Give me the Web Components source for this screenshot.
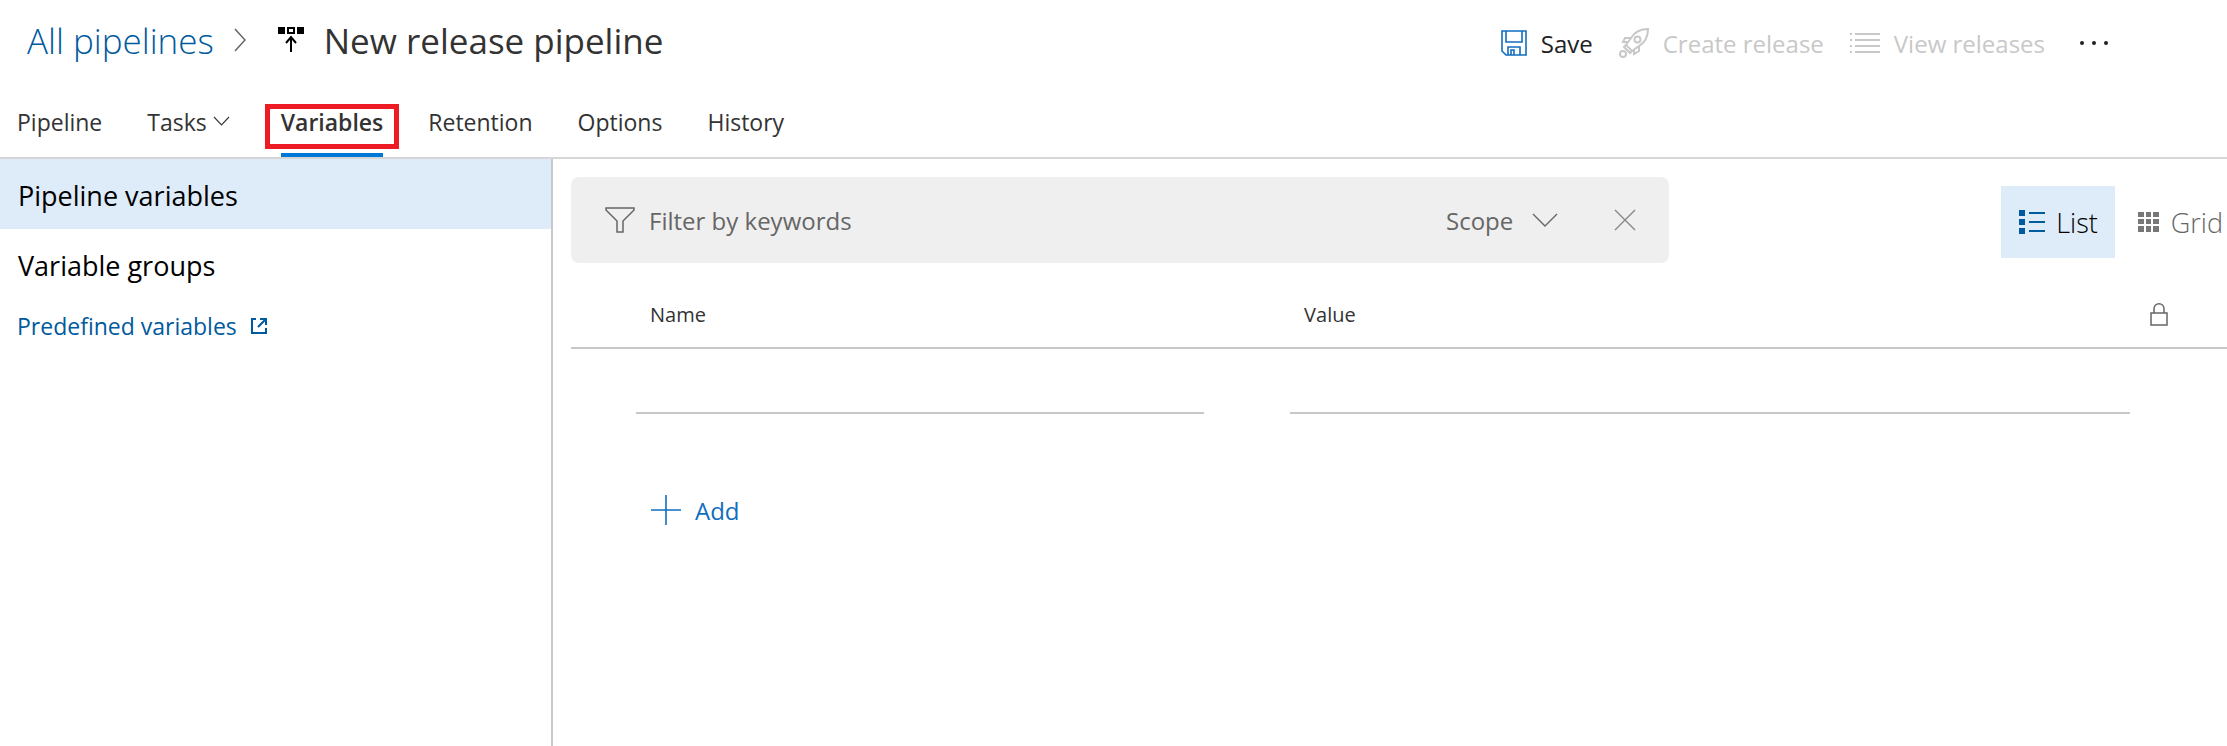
<!DOCTYPE html>
<html lang="en">
<head>
<meta charset="utf-8">
<title>New release pipeline</title>
<style>
  html, body { height: 100%; margin: 0; background: #fff; }
  body { font: 24px "Open Sans", "Noto Sans", sans-serif; color: #333; }
</style>
</head>
<body>
<release-page>
  <page-header slot="header">
    <tool-button icon="save" accent>Save</tool-button>
    <tool-button icon="rocket" disabled>Create release</tool-button>
    <tool-button icon="lines" disabled>View releases</tool-button>
    <tool-button icon="more" label="More actions"></tool-button>
  </page-header>
  <tab-strip slot="tabs">
    <tab-item>Pipeline</tab-item>
    <tab-item menu>Tasks</tab-item>
    <tab-item selected>Variables</tab-item>
    <tab-item>Retention</tab-item>
    <tab-item>Options</tab-item>
    <tab-item>History</tab-item>
  </tab-strip>
  <side-nav slot="nav"></side-nav>
  <filter-row></filter-row>
  <variable-table></variable-table>
</release-page>

<script>
const ICONS = {
  save: [26, 26, '<path d="M1 1H25V25H5L1 21Z M5 1V12H21V1 M7 25V17H19V25 M10 25V20H13V25" fill="none" stroke="currentColor" stroke-width="1.600"/>'],
  rocket: [30, 30, '<g fill="none" stroke="currentColor" stroke-width="2"><path d="M29 1C21 1 15 5 12 10L7 17L13 23L20 18C25 15 29 9 29 1Z"/><circle cx="18.500" cy="11.500" r="3"/><path d="M12 10H6L4 14L9 14 M20 18V23L15 26V21 M7 17L5 19L11 25L13 23"/><circle cx="4" cy="26" r="3"/></g>'],
  lines: [30, 20, '<path d="M5 1H30M5 7H30M5 13H30M5 19H30M0 1H2M0 7H2M0 13H2M0 19H2" stroke="currentColor" stroke-width="2"/>'],
  more: [30, 6, '<g fill="currentColor"><circle cx="3" cy="3" r="2"/><circle cx="15" cy="3" r="2"/><circle cx="27" cy="3" r="2"/></g>'],
  right: [12, 24, '<path d="M1 1L11 12L1 23" fill="none" stroke="currentColor" stroke-width="1.500"/>'],
  down: [17, 11, '<path d="M1 1L8.500 9L16 1" fill="none" stroke="currentColor" stroke-width="1.100"/>'],
  scope: [26, 14, '<path d="M1 1L13 13L25 1" fill="none" stroke="currentColor" stroke-width="1.400"/>'],
  close: [22, 22, '<path d="M1 1L21 21M21 1L1 21" stroke="currentColor" stroke-width="1.400"/>'],
  release: [26, 26, '<path d="M0 0H7V7H0ZM19 0H26V7H19Z"/><path d="M10 1H16V6H10Z M13 25V10 M8 16L13 10L18 16" fill="none" stroke="currentColor" stroke-width="2"/>'],
  external: [16, 16, '<path d="M5 1H1V15H15V10 M9 1H15V7 M15 1L7 9" fill="none" stroke="currentColor" stroke-width="2"/>'],
  funnel: [30, 26, '<path d="M1 1H29V3L18 14V25H12V14L1 3Z" fill="none" stroke="currentColor" stroke-width="1.500"/>'],
  list: [26, 24, '<path d="M0 0H6V6H0ZM0 9H6V15H0ZM0 18H6V24H0ZM10 2H26V4H10ZM10 11H26V13H10ZM10 20H26V22H10Z" fill="currentColor"/>'],
  grid: [21, 20, '<path d="M0 0H6V5H0ZM8 0H13V5H8ZM15 0H21V5H15ZM0 7H6V12H0ZM8 7H13V12H8ZM15 7H21V12H15ZM0 14H6V20H0ZM8 14H13V20H8ZM15 14H21V20H15Z" fill="currentColor"/>'],
  lock: [18, 23, '<path d="M1 10H17V22H1Z M4 10V6C4 -1 14 -1 14 6V10" fill="none" stroke="currentColor" stroke-width="1.500"/>'],
  plus: [30, 30, '<path d="M0 15H30M15 0V30" stroke="currentColor" stroke-width="1.600"/>']
};

function define(name, render) {
  customElements.define(name, class extends HTMLElement {
    connectedCallback() {
      if (!this.shadowRoot) this.attachShadow({ mode: 'open' }).innerHTML = render(this);
    }
  });
}

const RESET = `*{box-sizing:border-box}
  button,input,select{font:inherit;color:inherit;background:none;border:0;margin:0;padding:0;outline:0;border-radius:0}
  a{color:inherit;text-decoration:none}`;

define('ui-icon', el => {
  const [w, h, body] = ICONS[el.getAttribute('name')];
  return `<style>:host{display:block;flex:none}svg{display:block}</style>
    <svg width="${w}" height="${h}" viewBox="0 0 ${w} ${h}" aria-hidden="true">${body}</svg>`;
});

define('release-page', () => `<style>
  :host{display:flex;flex-direction:column;min-height:100%}
  .body{flex:1;display:grid;grid-template-columns:minmax(0,553fr) minmax(0,1674fr)}
  main{padding:18px 0 0 18px;min-width:0}
  </style>
  <slot name="header"></slot><slot name="tabs"></slot>
  <div class="body"><slot name="nav"></slot><main><slot></slot></main></div>`);

define('page-header', () => `<style>${RESET}
  :host{display:flex;justify-content:space-between;align-items:flex-start;height:88px;padding:0 118px 0 27px;box-sizing:border-box}
  .crumbs{display:flex;align-items:center;height:80px;font-size:35px;white-space:nowrap}
  a{font-weight:300;color:#005a9e}
  .sep{padding:0 32px 0 20px;color:#666}
  .kind{color:#000}
  h1{font:inherit;margin:0 0 0 20px}
  .tools{display:flex;align-items:center;gap:26px;height:86px}
  </style>
  <nav class="crumbs"><a href="#">All pipelines</a><ui-icon class="sep" name="right"></ui-icon>
  <ui-icon class="kind" name="release"></ui-icon><h1>New release pipeline</h1></nav>
  <div class="tools"><slot></slot></div>`);

define('tool-button', el => `<style>${RESET}
  :host{display:block}
  :host([label]){padding-left:8px}
  button{display:flex;align-items:center;gap:14px;white-space:nowrap;color:#222}
  button:disabled{color:#c8c8c8}
  :host([accent]) ui-icon{color:#106ebe}
  </style>
  <button type="button" ${el.hasAttribute('disabled') ? 'disabled' : ''} ${el.hasAttribute('label') ? `aria-label="${el.getAttribute('label')}"` : ''}>
  <ui-icon name="${el.getAttribute('icon')}"></ui-icon>${el.hasAttribute('label') ? '' : '<span><slot></slot></span>'}</button>`);

define('tab-strip', () => `<style>
  :host{display:flex;gap:45px;height:71px;box-sizing:border-box;padding-left:17px;border-bottom:2px solid #d6d6d6;font-size:23px}
  </style><slot></slot>`);

define('tab-item', el => `<style>${RESET}
  :host{display:block;position:relative}
  :host([menu]){padding-right:6px}
  button{display:flex;align-items:center;gap:6px;height:100%;padding-bottom:2px;white-space:nowrap}
  :host([selected]) button{font-weight:600;border-bottom:4px solid #0078d7;padding:2px 0 0}
  .mark{display:none}
  :host([selected]) .mark{display:block;position:absolute;inset:16px -16px 8px;border:5px solid #ed1c24;pointer-events:none}
  </style>
  <button type="button"><slot></slot>${el.hasAttribute('menu') ? '<ui-icon name="down"></ui-icon>' : ''}</button><div class="mark"></div>`);

define('side-nav', () => `<style>${RESET}
  :host{display:block;border-right:2px solid #c8c8c8;color:#000}
  nav{display:flex;flex-direction:column}
  a{display:flex;align-items:center;height:70px;padding:2px 0 0 18px;font-size:27px}
  a[aria-current]{background:#deebf8}
  a.doc{gap:14px;height:54px;padding:0 0 0 17px;font-size:23px;color:#005a9e}
  </style>
  <nav><a href="#" aria-current="page">Pipeline variables</a><a href="#">Variable groups</a>
  <a class="doc" href="#">Predefined variables<ui-icon name="external"></ui-icon></a></nav>`);

define('filter-row', () => `<style>${RESET}
  :host{display:flex;align-items:center;justify-content:space-between;gap:24px;color:#666}
  .bar{flex:0 1 1098px;display:flex;align-items:center;height:86px;padding:0 33px 0 34px;background:#efefef;border-radius:8px}
  input{flex:1;min-width:0;height:40px;margin-left:14px}
  input::placeholder{color:#666;opacity:1}
  .scope{display:grid;align-items:center;margin-right:56px}
  .scope>*{grid-area:1/1}
  select{appearance:none;width:112px;height:40px}
  .scope ui-icon{justify-self:end;pointer-events:none}
  .close{color:#888}
  .views{display:flex;margin-top:4px;font-size:27px}
  .views button{display:flex;align-items:center;gap:12px;height:72px;padding:0 4px 0 23px;font-weight:300}
  .views button[aria-pressed=true]{background:#deebf8;color:#000;gap:11px;padding:0 17px 0 18px}
  .views button[aria-pressed=true] ui-icon{color:#005a9e}
  .views button[aria-pressed=false] ui-icon{color:#777}
  </style>
  <div class="bar"><ui-icon name="funnel"></ui-icon>
  <input type="text" placeholder="Filter by keywords" aria-label="Filter by keywords">
  <div class="scope"><select aria-label="Scope"><option>Scope</option></select><ui-icon name="scope"></ui-icon></div>
  <button class="close" type="button" aria-label="Clear filter"><ui-icon name="close"></ui-icon></button></div>
  <div class="views"><button type="button" aria-pressed="true"><ui-icon name="list"></ui-icon>List</button>
  <button type="button" aria-pressed="false"><ui-icon name="grid"></ui-icon>Grid</button></div>`);

define('variable-table', () => `<style>${RESET}
  :host{display:block}
  table{width:100%;table-layout:fixed;border-collapse:separate;border-spacing:0}
  th{height:86px;padding:18px 0 0 79px;border-bottom:2px solid #c8c8c8;font-size:20px;font-weight:400;text-align:left}
  th.lock{padding-left:20px;color:#666}
  td{padding:0 0 0 65px}
  td:first-child{padding-right:21px}
  input{display:block;width:100%;height:65px;border-bottom:2px solid #c8c8c8}
  .add{display:flex;align-items:center;gap:14px;height:60px;margin:66px 0 0 80px;color:#106ebe}
  </style>
  <table><colgroup><col style="width:39.5%"><col><col style="width:97px"></colgroup>
  <thead><tr><th id="n">Name</th><th id="v">Value</th><th class="lock" aria-label="Secret"><ui-icon name="lock"></ui-icon></th></tr></thead>
  <tbody><tr><td><input type="text" aria-label="Name"></td><td><input type="text" aria-label="Value"></td><td></td></tr></tbody></table>
  <button class="add" type="button"><ui-icon name="plus"></ui-icon>Add</button>`);
</script>
</body>
</html>
